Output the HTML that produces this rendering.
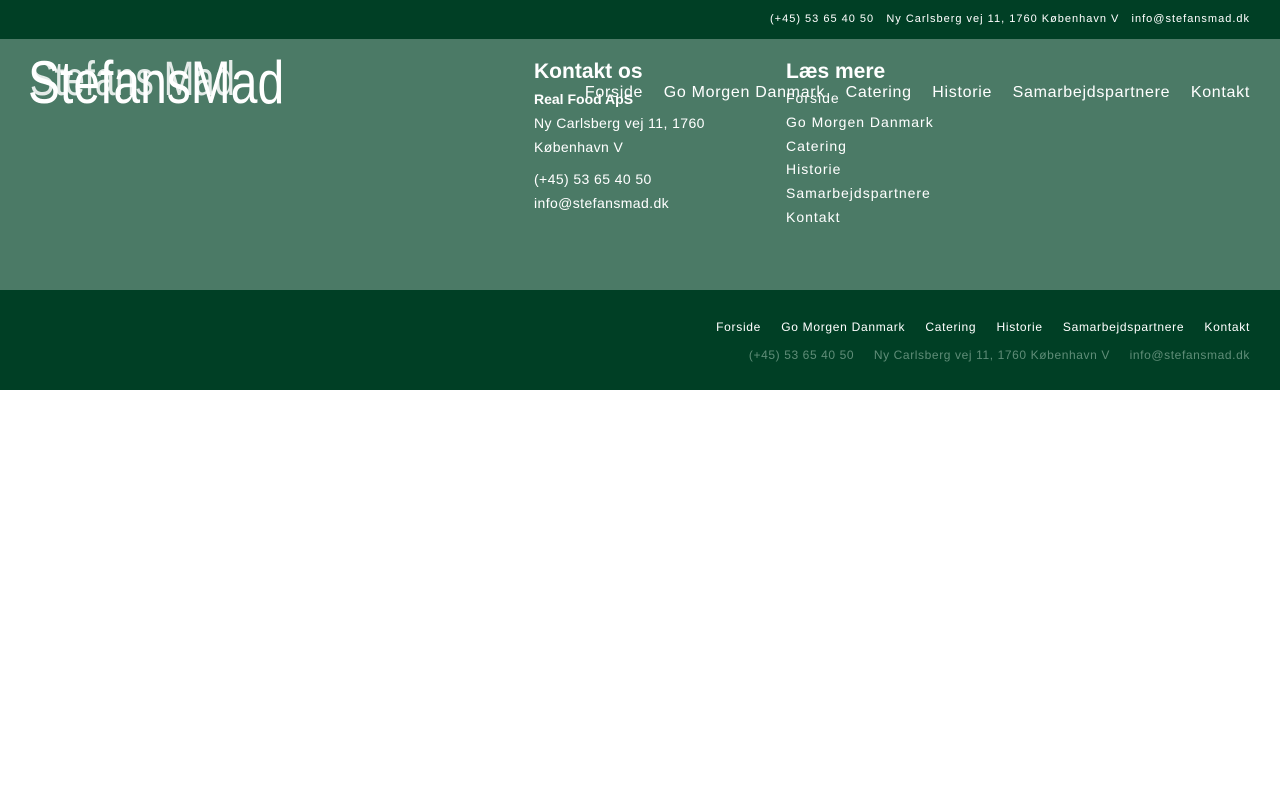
<!DOCTYPE html>
<html><head><meta charset="utf-8"><style>
*{margin:0;padding:0;box-sizing:border-box}
body{width:1280px;height:800px;background:#fff;font-family:"Liberation Sans",sans-serif;position:relative;overflow:hidden;color:#fff}
.a{position:absolute;white-space:nowrap}
#top{position:absolute;left:0;top:0;width:1280px;height:39px;background:#003f25}
#mid{position:absolute;left:0;top:39px;width:1280px;height:251px;background:#4b7a66}
#bot{position:absolute;left:0;top:290px;width:1280px;height:100px;background:#003f25}
.s14{font-size:14px;line-height:24px;letter-spacing:.4px}
</style></head><body>
<div id="top"></div><div id="mid"></div><div id="bot"></div>
<div class="a" style="right:30px;top:13px;font-size:11px;letter-spacing:1px">(+45) 53 65 40 50&nbsp;&nbsp;&nbsp;Ny Carlsberg vej 11, 1760 København V&nbsp;&nbsp;&nbsp;info@stefansmad.dk</div>
<div class="a" style="left:28px;top:48px;font-size:60px;transform:scaleX(.80);transform-origin:left">StefansMad</div>
<div class="a" style="left:30px;top:52px;font-size:48px;transform:scaleX(.76);transform-origin:left;opacity:.85">Stefans Mad</div>
<div class="a" style="left:534px;top:60px;font-size:21px;font-weight:bold">Kontakt os</div>
<div class="a" style="left:534px;top:91px;font-size:14px;font-weight:bold">Real Food ApS</div>
<div class="a s14" style="left:534px;top:111px">Ny Carlsberg vej 11, 1760<br>København V</div>
<div class="a s14" style="left:534px;top:167px">(+45) 53 65 40 50<br>info@stefansmad.dk</div>
<div class="a" style="left:786px;top:60px;font-size:21px;font-weight:bold">Læs mere</div>
<div class="a s14" style="left:786px;top:87px;line-height:23.8px;letter-spacing:1px">Forside<br>Go Morgen Danmark<br>Catering<br>Historie<br>Samarbejdspartnere<br>Kontakt</div>
<div class="a" style="right:30px;top:84px;font-size:16px;letter-spacing:.7px">Forside&nbsp;&nbsp;&nbsp;&nbsp;Go Morgen Danmark&nbsp;&nbsp;&nbsp;&nbsp;Catering&nbsp;&nbsp;&nbsp;&nbsp;Historie&nbsp;&nbsp;&nbsp;&nbsp;Samarbejdspartnere&nbsp;&nbsp;&nbsp;&nbsp;Kontakt</div>
<div class="a" style="right:30px;top:320px;font-size:12px;letter-spacing:.7px">Forside&nbsp;&nbsp;&nbsp;&nbsp;&nbsp;Go Morgen Danmark&nbsp;&nbsp;&nbsp;&nbsp;&nbsp;Catering&nbsp;&nbsp;&nbsp;&nbsp;&nbsp;Historie&nbsp;&nbsp;&nbsp;&nbsp;&nbsp;Samarbejdspartnere&nbsp;&nbsp;&nbsp;&nbsp;&nbsp;Kontakt</div>
<div class="a" style="right:30px;top:348px;font-size:12px;letter-spacing:.6px;color:#5f8d78">(+45) 53 65 40 50&nbsp;&nbsp;&nbsp;&nbsp;&nbsp;Ny Carlsberg vej 11, 1760 København V&nbsp;&nbsp;&nbsp;&nbsp;&nbsp;info@stefansmad.dk</div>
</body></html>
